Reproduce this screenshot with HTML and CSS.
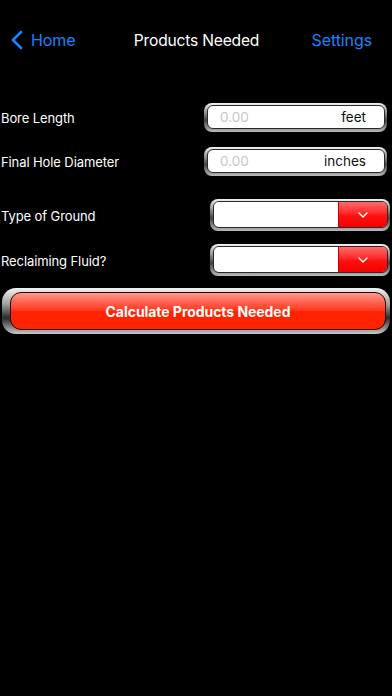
FILE: index.html
```html
<!DOCTYPE html>
<html>
<head>
<meta charset="utf-8">
<link rel="stylesheet" href="styles.css">
</head>
<body>
<div class="status"></div>
<nav class="nav">
  <div class="nav-left">
    <svg class="chev" width="12" height="20" viewBox="0 0 12 20"><path d="M10 2 L2 10 L10 18" fill="none" stroke="#1a84ff" stroke-width="2.6" stroke-linecap="round" stroke-linejoin="round"/></svg>
    <span class="nav-link">Home</span>
  </div>
  <div class="nav-title">Products Needed</div>
  <div class="nav-right nav-link">Settings</div>
</nav>
<main class="form">
  <div class="row row-field first">
    <span class="label">Bore Length</span>
    <div class="field">
      <div class="field-inner"><span class="ph">0.00</span><span class="unit">feet</span></div>
    </div>
  </div>
  <div class="row row-field second">
    <span class="label">Final Hole Diameter</span>
    <div class="field">
      <div class="field-inner"><span class="ph">0.00</span><span class="unit">inches</span></div>
    </div>
  </div>
  <div class="row row-select third">
    <span class="label">Type of Ground</span>
    <div class="select">
      <div class="select-inner"><div class="select-value"></div><div class="select-btn"><svg width="10" height="6" viewBox="0 0 10 6"><path d="M1 1 L5 5 L9 1" fill="none" stroke="#fff" stroke-width="1.4" stroke-linecap="round" stroke-linejoin="round"/></svg></div></div>
    </div>
  </div>
  <div class="row row-select fourth">
    <span class="label">Reclaiming Fluid?</span>
    <div class="select">
      <div class="select-inner"><div class="select-value"></div><div class="select-btn"><svg width="10" height="6" viewBox="0 0 10 6"><path d="M1 1 L5 5 L9 1" fill="none" stroke="#fff" stroke-width="1.4" stroke-linecap="round" stroke-linejoin="round"/></svg></div></div>
    </div>
  </div>
  <div class="btn-wrap">
    <div class="btn"><div class="btn-inner">Calculate Products Needed</div></div>
  </div>
</main>
</body>
</html>
```
FILE: styles.css
```css
html, body {
  margin: 0;
  padding: 0;
  background: #000;
  width: 392px;
  height: 696px;
  overflow: hidden;
  font-family: Inter, "Liberation Sans", Arial, sans-serif;
  color: #fff;
}
.status { height: 18px; }
.nav {
  height: 44px;
  display: grid;
  grid-template-columns: 1fr auto 1fr;
  align-items: center;
  padding: 0 20px 0 11px;
}
.nav-left { display: flex; align-items: center; gap: 8px; }
.chev { display: block; }
.nav-link { color: #1a84ff; font-size: 16px; letter-spacing: -0.1px; }
.nav-title { font-size: 15.6px; color: #fff; font-weight: 400; letter-spacing: -0.2px; position: relative; left: 5px; }
.nav-right { text-align: right; }

.form { padding-top: 41px; }
.row {
  display: flex;
  align-items: center;
  justify-content: space-between;
}
.label { font-size: 13px; padding-left: 1px; letter-spacing: -0.1px; padding-top: 2px; }
.row-field { height: 28px; padding-right: 5px; }
.second { margin-top: 16px; }
.third { margin-top: 24px; height: 32px; padding-right: 2px; }
.fourth { margin-top: 13px; height: 32px; padding-right: 2px; }

.field {
  width: 183px;
  height: 29px;
  box-sizing: border-box;
  border-radius: 8px;
  padding: 2px 2px 3px 3px;
  background: linear-gradient(to bottom, #f4f4f4 0%, #9a9a9a 30%, #444 60%, #bbb 100%);
}
.field-inner {
  height: 100%;
  box-sizing: border-box;
  border: 1px solid #2a2a2a;
  border-radius: 6px;
  background: #fff;
  display: flex;
  align-items: center;
  justify-content: space-between;
  padding: 0 18px 0 12px;
  font-size: 13.5px;
}
.ph { color: #c6c6c6; }
.unit { color: #111; }

.select {
  width: 180px;
  height: 32px;
  box-sizing: border-box;
  border-radius: 8px;
  padding: 2px 2px 3px 3px;
  background: linear-gradient(to bottom, #f4f4f4 0%, #9a9a9a 30%, #444 60%, #bbb 100%);
}
.select-inner {
  height: 100%;
  box-sizing: border-box;
  border: 1px solid #2a2a2a;
  border-radius: 6px;
  overflow: hidden;
  display: flex;
}
.select-value { flex: 1; background: #fff; }
.select-btn {
  width: 48px;
  display: flex;
  align-items: center;
  justify-content: center;
  background: linear-gradient(to bottom, #ff6a6a 0%, #ff2a2a 45%, #ff1010 55%, #f40000 100%);
  border-left: 1px solid #c40000;
}
.select-btn svg { display: block; }

.btn-wrap { margin-top: 12px; padding: 0 2px 0 2px; }
.btn {
  height: 46px;
  box-sizing: border-box;
  border-radius: 14px;
  padding: 4px 4px 4px 8px;
  background: linear-gradient(to bottom, #f2f2f2 0%, #a0a0a0 35%, #2a2a2a 65%, #c8c8c8 100%);
}
.btn-inner {
  height: 100%;
  box-sizing: border-box;
  border: 1px solid #300;
  border-radius: 11px;
  background: linear-gradient(to bottom, #ff9a90 0%, #ff5a48 30%, #ff3820 48%, #ff2200 52%, #ff2400 100%);
  display: flex;
  align-items: center;
  justify-content: center;
  font-weight: 700;
  font-size: 14px;
  color: #fff;
  letter-spacing: -0.05px;
}
```
